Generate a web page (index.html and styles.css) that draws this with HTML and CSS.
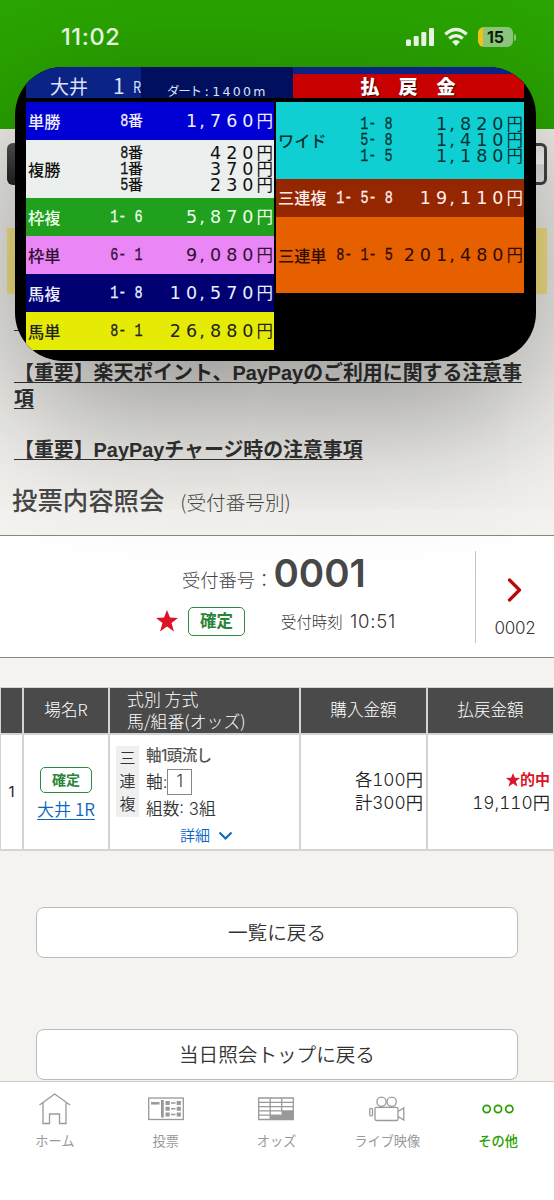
FILE: index.html
```html
<!DOCTYPE html>
<html lang="ja">
<head>
<meta charset="utf-8">
<title>投票内容照会</title>
<link rel="stylesheet" href="styles.css">
</head>
<body>
<div class="screen">
  <header class="top">
    <div class="clock">11:02</div>
    <div class="status">
      <svg class="signal" width="28" height="20" viewBox="0 0 28 20"><g fill="#e6f2e2"><rect x="0" y="12.5" width="5" height="6.5" rx="1.3"/><rect x="7.700" y="9" width="5" height="10" rx="1.300"/><rect x="15.300" y="5" width="5" height="14" rx="1.300"/><rect x="23" y="1" width="5" height="18" rx="1.300"/></g></svg>
      <svg class="wifi" width="24" height="20" viewBox="0 0 24 20"><g fill="none" stroke="#e6f2e2" stroke-width="3.300"><path d="M1.300 7.200Q12-2.200 22.700 7.200"/><path d="M5.200 11.600Q12 5.600 18.800 11.600"/></g><path d="M8 14.700Q12 11.500 16 14.700L12 19Z" fill="#e6f2e2"/></svg>
      <div class="battery">15</div><i class="nub"></i>
    </div>
  </header>

  <div class="behind">
    <div class="navbtns"><i class="dark"></i><i class="light"></i></div>
    <div class="band"></div>
    <div class="rule"></div>
  </div>

  <div class="notices">
    <p>【重要】楽天ポイント、PayPayのご利用に関する注意事項</p>
    <p>【重要】PayPayチャージ時の注意事項</p>
  </div>

  <h1 class="title">投票内容照会<span>(受付番号別)</span></h1>

  <section class="receipt">
    <div class="main">
      <div class="number">受付番号：<b>0001</b></div>
      <div class="meta">
        <svg width="22" height="22" viewBox="0 0 22 22"><path d="M11 0l3 7.500 8 .5-6.500 5 2.500 8.500-7-5-7 5L6.500 13 0 8l8-.5z" fill="#dc1428"/></svg>
        <span class="badge">確定</span>
        <span class="time">受付時刻 <em>10:51</em></span>
      </div>
    </div>
    <div class="next">
      <svg width="16" height="24" viewBox="0 0 16 24"><path d="M2.500 2L12.500 12 2.500 22" fill="none" stroke="#b70a0a" stroke-width="3.200" stroke-linecap="round" stroke-linejoin="round"/></svg>
      <span>0002</span>
    </div>
  </section>

  <section class="bets">
    <div class="cell head"></div>
    <div class="cell head center">場名R</div>
    <div class="cell head type">式別 方式<br>馬/組番(オッズ)</div>
    <div class="cell head center">購入金額</div>
    <div class="cell head center">払戻金額</div>

    <div class="cell idx">1</div>
    <div class="cell venue"><span class="badge small">確定</span><a>大井 1R</a></div>
    <div class="cell bet">
      <div class="kind">三<br>連<br>複</div>
      <div class="detail">
        <div class="method">軸1頭流し</div>
        <div class="axis">軸:<span>1</span></div>
        <div class="count">組数: 3組</div>
        <div class="more">詳細<svg width="15" height="9" viewBox="0 0 15 9"><path d="M1.500 1.500L7.500 7.500 13.500 1.500" fill="none" stroke="#0a66c0" stroke-width="2"/></svg></div>
      </div>
    </div>
    <div class="cell money">各100円<br>計300円</div>
    <div class="cell money"><strong><svg width="14" height="14" viewBox="0 0 22 22"><path d="M11 0l3 7.500 8 .5-6.500 5 2.500 8.500-7-5-7 5L6.500 13 0 8l8-.5z" fill="#dc1428"/></svg>的中</strong>19,110円</div>
  </section>

  <div class="actions">
    <div class="btn">一覧に戻る</div>
    <div class="btn">当日照会トップに戻る</div>
  </div>

  <nav class="tabs">
    <div class="tab"><svg width="36" height="34" viewBox="0 0 36 34"><path d="M2.500 14L17.700 3 33 14M6 12V32.500H12.500V23H22.500V32.500H29V12" fill="none" stroke="#999" stroke-width="1.300"/></svg>ホーム</div>
    <div class="tab"><svg width="36" height="34" viewBox="0 0 36 34"><rect x=".7" y="7" width="34.600" height="21.500" fill="none" stroke="#999" stroke-width="1.300"/><path d="M3 12.300H11.500" stroke="#999" stroke-width="2.500"/><path d="M14.400 9V26.500" stroke="#999" stroke-width="2.800"/><g fill="#999"><path d="M17.500 10h4.200v4h-4.200zM28.700 10h4.200v4h-4.200zM17.500 15.800h4.200v4h-4.200zM28.700 15.800h4.200v4h-4.200zM17.500 21.500h4.200v4h-4.200zM28.700 21.500h4.200v4h-4.200z"/></g><path d="M23 12h4.500M23 17.800h4.500M23 23.500h4.500" stroke="#999" stroke-width="1.500"/></svg>投票</div>
    <div class="tab"><svg width="36" height="34" viewBox="0 0 36 34"><path d="M.7 7H35.300V28.500H.7zM.7 11.300H35.300M.7 15.600H35.300M.7 19.900H35.300M.7 24.200H23M12.200 7V28.500M23.700 7V20" fill="none" stroke="#999" stroke-width="1.300"/><path d="M12.200 24.200H23.500V19.900H35.300V28.500H12.200z" fill="#999"/></svg>オッズ</div>
    <div class="tab"><svg width="36" height="34" viewBox="0 0 36 34"><g fill="none" stroke="#999" stroke-width="1.300"><circle cx="12.500" cy="10.800" r="4.600"/><circle cx="22.700" cy="10.800" r="4.600"/><rect x="6" y="16.300" width="23" height="13.200" rx="1.500"/><rect x=".8" y="17.300" width="2.700" height="7.500" rx="1"/><path d="M29 20.500L34.800 17V29L29 25.500"/></g></svg>ライブ映像</div>
    <div class="tab on"><svg width="36" height="34" viewBox="0 0 36 34"><g fill="none" stroke="#2a9f00" stroke-width="1.700"><circle cx="6.700" cy="18" r="3.600"/><circle cx="18" cy="18" r="3.600"/><circle cx="29.300" cy="18" r="3.600"/></g></svg>その他</div>
  </nav>

  <div class="pip">
    <div class="video">
      <div class="vhead">
        <div class="race"><span class="place">大井</span><span class="rno">1</span><span class="r">R</span></div>
        <div class="course">ダート<em>:</em><span>1400m</span></div>
        <div class="pay"><div>払戻金</div></div>
      </div>
      <div class="vbody">
        <div class="col">
          <div class="row blue"><b>単勝</b><div class="line"><span class="combo"><i>8</i>番</span><span class="yen">1<s>,</s>760<u>円</u></span></div></div>
          <div class="row white"><b>複勝</b><div class="line"><span class="combo"><i>8</i>番</span><span class="yen">420<u>円</u></span></div><div class="line"><span class="combo"><i>1</i>番</span><span class="yen">370<u>円</u></span></div><div class="line"><span class="combo"><i>5</i>番</span><span class="yen">230<u>円</u></span></div></div>
          <div class="row green"><b>枠複</b><div class="line"><span class="combo"><i>1- 6</i></span><span class="yen">5<s>,</s>870<u>円</u></span></div></div>
          <div class="row pink"><b>枠単</b><div class="line"><span class="combo"><i>6- 1</i></span><span class="yen">9<s>,</s>080<u>円</u></span></div></div>
          <div class="row navy"><b>馬複</b><div class="line"><span class="combo"><i>1- 8</i></span><span class="yen">10<s>,</s>570<u>円</u></span></div></div>
          <div class="row yellow"><b>馬単</b><div class="line"><span class="combo"><i>8- 1</i></span><span class="yen">26<s>,</s>880<u>円</u></span></div></div>
        </div>
        <div class="col">
          <div class="row cyan"><b>ワイド</b><div class="line"><span class="combo"><i>1- 8</i></span><span class="yen">1<s>,</s>820<u>円</u></span></div><div class="line"><span class="combo"><i>5- 8</i></span><span class="yen">1<s>,</s>410<u>円</u></span></div><div class="line"><span class="combo"><i>1- 5</i></span><span class="yen">1<s>,</s>180<u>円</u></span></div></div>
          <div class="row brown"><b>三連複</b><div class="line"><span class="combo"><i>1- 5- 8</i></span><span class="yen">19<s>,</s>110<u>円</u></span></div></div>
          <div class="row orange"><b>三連単</b><div class="line"><span class="combo"><i>8- 1- 5</i></span><span class="yen">201<s>,</s>480<u>円</u></span></div></div>
        </div>
      </div>
    </div>
  </div>
</div>
</body>
</html>
```
FILE: styles.css
```css
* { box-sizing: border-box; }
body { margin: 0; font-family: "Liberation Sans", "Noto Sans CJK JP", sans-serif; color: #333; }
.screen { position: relative; width: 554px; height: 1200px; overflow: hidden; background: #f4f3ef; display: flex; flex-direction: column; }

/* status bar */
.top { height: 129px; background: #2aa600; padding: 23px 38px 0 61px; display: flex; justify-content: space-between; align-items: flex-start; }
.clock, .status { position: relative; z-index: 2; }
.clock { font: 500 23.5px/28px Inter, sans-serif; color: #e6f2e2; letter-spacing: .6px; }
.status { display: flex; align-items: center; height: 28px; }
.wifi { margin: 0 10px 0 10px; }
.battery { width: 35px; height: 20px; border-radius: 6px; background: linear-gradient(90deg, #f2c118 5px, #8cc47b 5px); font: 700 16px/20px Inter, sans-serif; color: #0c1a08; text-align: center; }
.nub { width: 2px; height: 7px; margin-left: 1px; border-radius: 0 2px 2px 0; background: #8cc47b; }

/* page content partly covered by the video */
.behind { height: 230px; padding: 14px 7px 0; }
.navbtns { display: flex; justify-content: space-between; height: 42px; }
.navbtns i { width: 60px; border-radius: 6px; }
.dark { background: linear-gradient(#555, #222); }
.light { background: linear-gradient(#eee, #fff 50%, #e2e2e2 52%, #eee); border: 3px solid #444; }
.band { height: 66px; margin-top: 43px; background: #fbe986; }
.rule { height: 1px; width: 200px; margin: 36px 0 0 7px; background: #333; }

.notices { height: 122px; padding: 2px 14px 0 14px; font-weight: 700; font-size: 19.9px; line-height: 25.5px; color: #333; }
.notices p { margin: 0 0 25.5px; text-decoration: underline; text-decoration-skip-ink: none; text-decoration-thickness: 1.3px; text-underline-offset: 2px; }
.title { height: 54px; margin: 0; padding: 0 12px; font-size: 25.4px; line-height: 40px; font-weight: 500; color: #484848; white-space: nowrap; }
.title span { margin-left: 16px; font-family: "Noto Sans CJK JP", sans-serif; font-size: 19.6px; font-weight: 300; }

/* receipt */
.receipt { height: 123px; display: flex; align-items: center; background: #fff; border-top: 1px solid #888; border-bottom: 1px solid #888; }
.main { width: 475px; height: 121px; display: flex; flex-direction: column; }
.number { height: 70px; padding: 14px 0 0 182px; font: 300 18.3px/46px "Noto Sans CJK JP", sans-serif; color: #444; white-space: nowrap; }
.number b { font: 600 38.5px/46px Inter, sans-serif; letter-spacing: 0; color: #484848; }
.meta { display: flex; align-items: center; height: 30px; padding-left: 156px; }
.badge { display: block; width: 57px; height: 29px; margin-left: 10px; border: 1.5px solid #2e8b3d; border-radius: 5px; background: #fff; color: #2a8538; font: 700 16.5px/25px "Noto Sans CJK JP", sans-serif; text-align: center; }
.time { margin-left: 36px; font: 300 15.4px/24px "Noto Sans CJK JP", sans-serif; white-space: nowrap; }
.time em { font: 300 18.5px/24px Inter, sans-serif; margin-left: 4px; letter-spacing: .8px; }
.next { flex: 1; height: 92px; border-left: 1px solid #c4c4c4; display: flex; flex-direction: column; align-items: center; padding: 27px 0 0 0; gap: 15px; font: 300 17px/22px Inter, sans-serif; letter-spacing: -.2px; }
.next svg { flex: none; }

/* bets table */
.bets { flex: none; margin-top: 29px; height: 164px; padding: 1px 1px 2px 1px; background: #d4d4d4; display: grid; grid-template-columns: 21px 84px 189px 125px 1fr; grid-template-rows: 45px 1fr; gap: 2px 2px; font-family: "Noto Sans CJK JP", sans-serif; font-weight: 350; }
.cell { background: #fff; font-size: 16.6px; line-height: 23px; color: #222; }
.head { background: #4a4a4a; color: #fff; font-weight: 300; }
.center { display: grid; place-items: center; padding-bottom: 2px; }
.type { padding-left: 17px; white-space: nowrap; line-height: 22px; font-size: 16.9px; }
.idx { display: grid; place-items: center; font: 400 15px Inter, sans-serif; padding-bottom: 2px; }
.venue { display: flex; flex-direction: column; align-items: center; padding-top: 32px; }
.badge.small { width: 52px; height: 26px; margin: 0 0 4px; font-size: 14px; line-height: 22px; }
.venue a { font-size: 17px; line-height: 23px; color: #0a66c0; text-decoration: underline; text-underline-offset: 3px; text-decoration-thickness: 1.3px; }
.bet { display: flex; padding: 11px 0 0 6px; color: #333; }
.kind { width: 23px; height: 71px; background: #efefef; text-align: center; line-height: 23px; font-size: 16px; }
.detail { flex: 1; padding-left: 7px; font: 350 16.7px/23px Inter, "Noto Sans CJK JP", sans-serif; }
.method { font-weight: 500; color: #555; font-size: 15.5px; line-height: 20px; letter-spacing: -.6px; }
.axis { display: flex; height: 32px; align-items: center; }
.axis span { width: 25px; height: 26px; border: 1px solid #888; text-align: center; line-height: 23px; }
.more { display: flex; align-items: center; gap: 8px; padding: 3px 0 0 34px; color: #0a66c0; font-size: 15px; }
.money { text-align: right; padding: 33px 3px 0 0; font: 350 17.3px/23px Inter, "Noto Sans CJK JP", sans-serif; font-variant-numeric: tabular-nums; }
.money strong { display: flex; justify-content: flex-end; align-items: center; gap: 0; color: #dc1428; font-size: 15px; }

/* actions */
.actions { padding: 56px 36px 0; display: flex; flex-direction: column; gap: 71px; flex: 1; min-height: 0; }
.btn { flex: none; height: 51px; border: 1.5px solid #bcbcbc; border-radius: 8px; background: #fff; text-align: center; font: 350 19.6px/48px "Noto Sans CJK JP", sans-serif; }

/* tab bar */
.tabs { flex: none; height: 119px; border-top: 1px solid #ccc; background: #fff; display: grid; grid-template-columns: repeat(5, 1fr); }
.tab { display: flex; flex-direction: column; align-items: center; padding: 9px 1px 0 0; gap: 6px; font: 400 13.2px/20px "Noto Sans CJK JP", sans-serif; color: #999; }
.on { color: #2a9f00; font-weight: 500; }

/* floating video */
.pip { position: absolute; left: 15px; top: 67px; width: 521px; height: 294px; border-radius: 48px; overflow: hidden; background: #000; padding: 0 12px 0 11px; }
.screen::after { content: ""; position: absolute; left: 15px; top: 67px; width: 521px; height: 294px; border-radius: 48px; box-shadow: 0 48px 150px 5px rgba(0, 0, 0, .4); pointer-events: none; }
.vhead { height: 31px; display: flex; background: #00105f; color: #dde2f5; }
.race { width: 115px; height: 31px; background: #0a2385; padding-left: 24px; display: flex; font: 400 19px/37px "Noto Sans CJK JP", sans-serif; white-space: nowrap; }
.rno { margin-left: 25px; font-size: 21px; }
.r { margin-left: 7px; font-size: 16px; line-height: 39px; transform: scaleX(.8); }
.course { width: 151.5px; padding-left: 26px; font: 400 12.5px/48px "Noto Sans CJK JP", sans-serif; white-space: nowrap; letter-spacing: -1.2px; }
.course em { font-style: normal; margin: 0 5px 0 4px; }
.course span { font: 400 12.5px/48px "DejaVu Sans", sans-serif; letter-spacing: 2.3px; }
.pay { flex: 1; height: 31px; background: #0a2385; padding-top: 7px; }
.pay div { height: 24px; background: #c80000; color: #fff; font: 900 19px/23px "Noto Sans CJK JP", sans-serif; letter-spacing: 19px; padding-left: 68px; text-shadow: 1px 1px 1px #300; }
.vbody { display: flex; gap: 2px; padding-top: 4px; }
.col { width: 248.5px; }
.row { display: flex; flex-direction: column; justify-content: center; position: relative; height: 38px; }
.row b { position: absolute; left: 2px; font: 500 16.2px/24px "Noto Sans CJK JP", sans-serif; margin-top: -1px; }
.line { display: grid; grid-template-columns: 117px 1fr; padding-right: 1px; height: 16.2px; line-height: 16.2px; white-space: nowrap; text-align: right; }
.combo { font: 500 15px/14.5px "Noto Sans CJK JP", sans-serif; display: flex; justify-content: flex-end; }
.combo i { font: 400 19px/16.2px "Liberation Mono", monospace; transform: scaleX(.71); transform-origin: right; white-space: pre; -webkit-text-stroke: .3px currentColor; }
.yen { font: 400 17.5px/16.2px "DejaVu Sans", sans-serif; letter-spacing: 5px; display: flex; justify-content: flex-end; }
.yen s { text-decoration: none; letter-spacing: 5.4px; margin-left: -3px; }
.yen u { text-decoration: none; letter-spacing: 0; font: 400 16.5px/14.8px "Noto Sans CJK JP", sans-serif; margin-left: -2px; }
.blue { background: #0000d4; color: #eef; }
.white { background: #ebefed; color: #111; height: 58px; }
.green { background: #20a01c; color: #efe; }
.pink { background: #ea86f5; color: #301030; }
.navy { background: #000073; color: #eef; }
.yellow { background: #e6eb05; color: #222; }
.cyan { background: #10cfd2; color: #033; height: 76.5px; }
.brown { background: #952700; color: #fee; height: 38.5px; }
.orange { background: #e66000; color: #300c00; height: 76px; }
```
